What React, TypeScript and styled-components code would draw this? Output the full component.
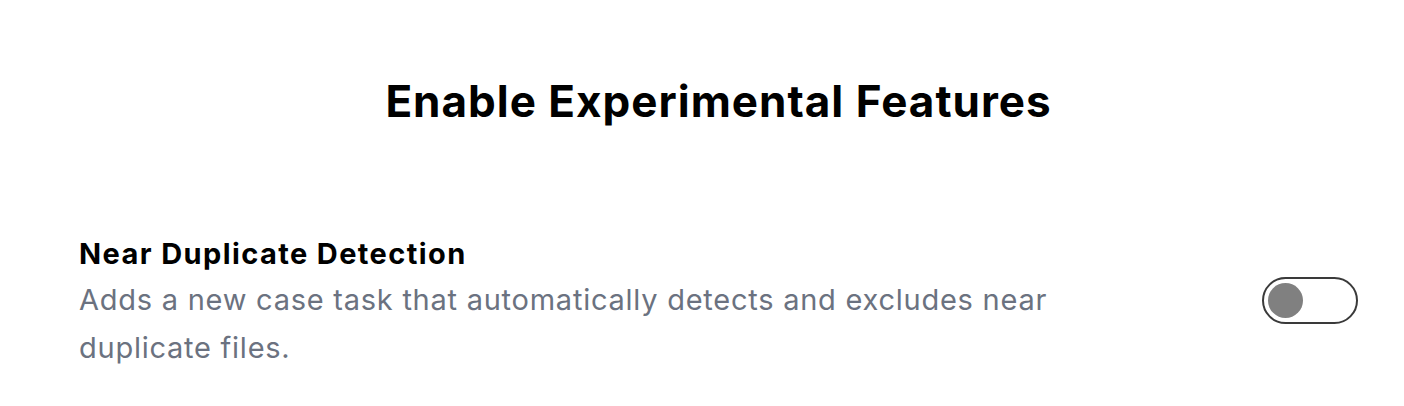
import * as React from "react";
import { useState } from "react";
import styled, { createGlobalStyle } from "styled-components";

const GlobalStyle = createGlobalStyle`
  body {
    margin: 0;
    background: #ffffff;
    font-family: Inter, "Noto Sans", sans-serif;
    color: #000000;
  }
`;

const Page = styled.div`
  width: 1404px;
  height: 406px;
  box-sizing: border-box;
  padding: 71px 46px 0 79px;
`;

const Title = styled.h1`
  margin: 0 0 104px;
  text-align: center;
  font-size: 44px;
  line-height: 60px;
  font-weight: 700;
  letter-spacing: 1px;
`;

const Row = styled.div`
  display: flex;
  align-items: center;
  justify-content: space-between;
`;

const Info = styled.div`
  display: flex;
  flex-direction: column;
  max-width: 1020px;
`;

const Label = styled.h2`
  margin: 0 0 3px;
  font-size: 29px;
  line-height: 38px;
  font-weight: 700;
  letter-spacing: 1.4px;
`;

const Description = styled.p`
  margin: 0;
  font-size: 29px;
  line-height: 48px;
  letter-spacing: 0.75px;
  color: #6b7280;
`;

const Switch = styled.button<{ $on: boolean }>`
  flex: none;
  width: 96px;
  height: 47px;
  padding: 0 4px;
  border: 2px solid #3a3a3a;
  border-radius: 24px;
  background: #ffffff;
  display: flex;
  align-items: center;
  justify-content: ${(p) => (p.$on ? "flex-end" : "flex-start")};
  cursor: pointer;
  margin-bottom: 6px;
`;

const Knob = styled.span`
  width: 35px;
  height: 35px;
  border-radius: 50%;
  background: #808080;
`;

export default function App() {
  const [enabled, setEnabled] = useState(false);
  return (
    <>
      <GlobalStyle />
      <Page>
        <Title>Enable Experimental Features</Title>
        <Row>
          <Info>
            <Label>Near Duplicate Detection</Label>
            <Description>
              Adds a new case task that automatically detects and excludes near
              duplicate files.
            </Description>
          </Info>
          <Switch
            $on={enabled}
            role="switch"
            aria-checked={enabled}
            onClick={() => setEnabled(!enabled)}
          >
            <Knob />
          </Switch>
        </Row>
      </Page>
    </>
  );
}
